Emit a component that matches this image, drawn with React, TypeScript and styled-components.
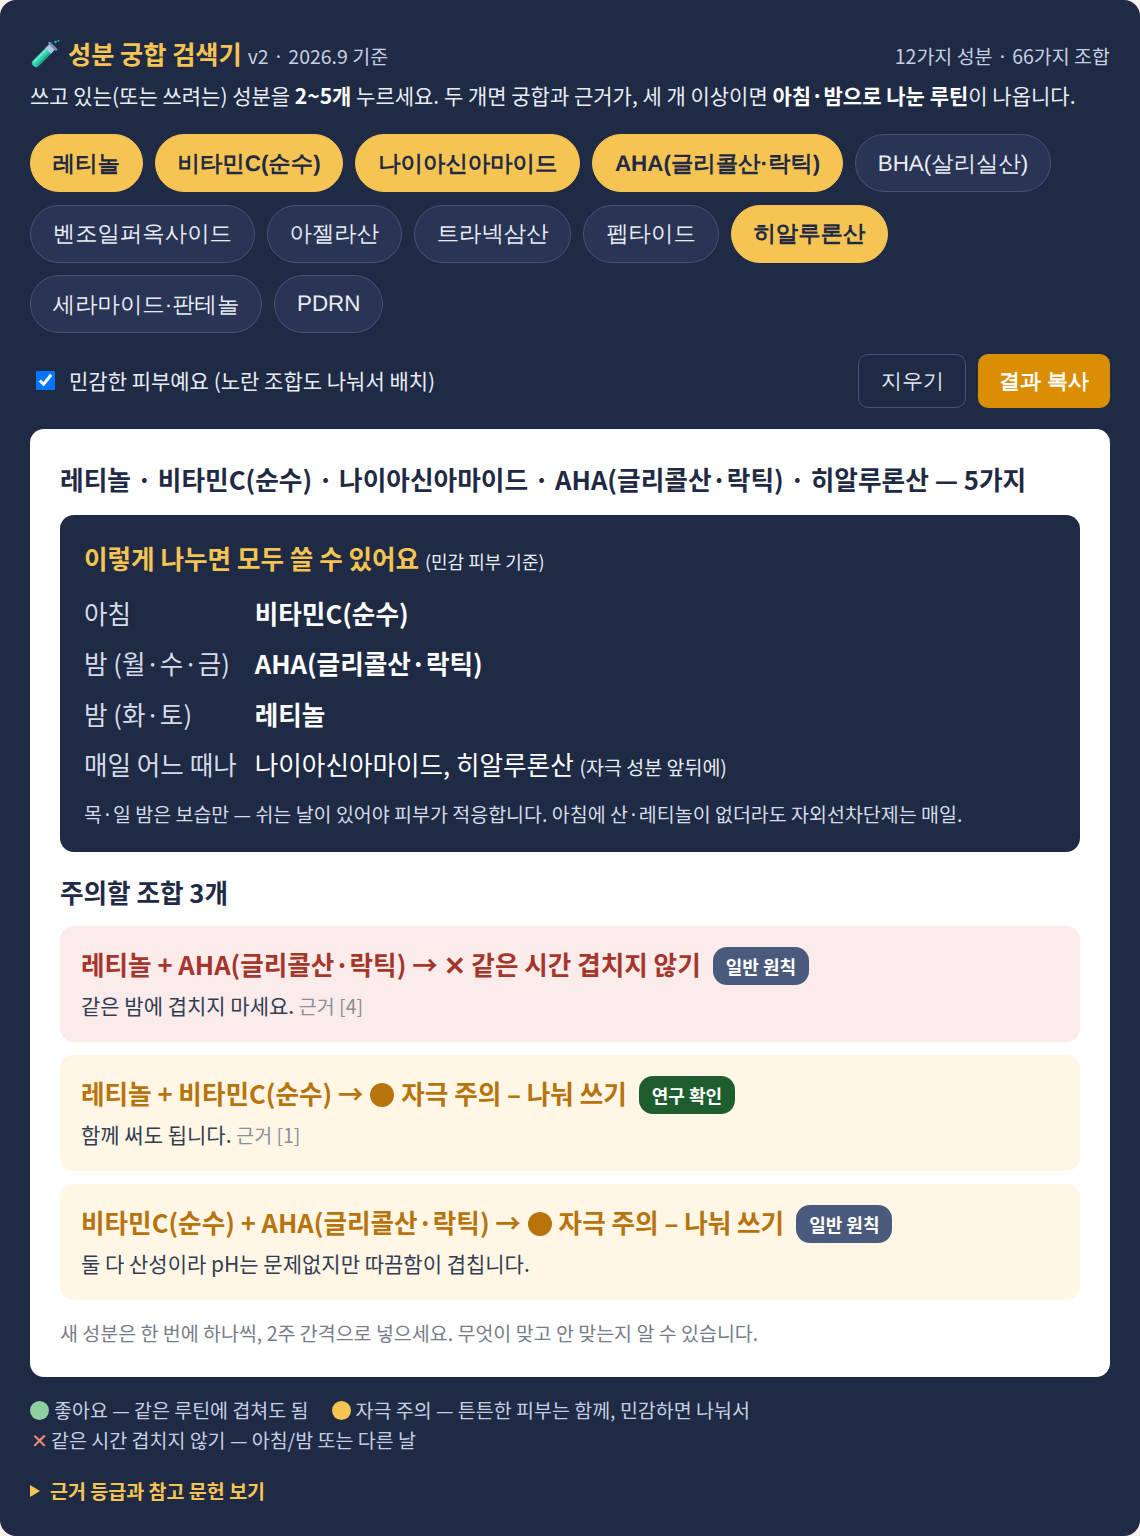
import styled, { createGlobalStyle } from "styled-components";

const GlobalStyle = createGlobalStyle`
  html, body {
    margin: 0;
    padding: 0;
    background: #f5f1ea;
  }
  body {
    font-family: "Noto Sans CJK KR", "Noto Sans", sans-serif;
  }
  * {
    box-sizing: border-box;
  }
`;

const Shell = styled.div`
  width: 1140px;
  height: 1536px;
  background: #1f2a44;
  border-radius: 16px;
  padding: 30px;
  color: #fff;
  overflow: hidden;
`;

const Header = styled.div`
  display: flex;
  justify-content: space-between;
  align-items: baseline;
  height: 49px;
  padding-top: 5px;
`;

const Title = styled.h1`
  margin: 0;
  display: flex;
  align-items: baseline;
  gap: 6px;
  font-size: 25.2px;
  line-height: 36px;
  font-weight: 700;
  color: #f6c453;
`;

const TubeSvg = styled.svg`
  align-self: center;
  flex: none;
  margin-top: -2px;
`;

const TitleText = styled.span`
  margin-left: 2px;
`;

const Version = styled.span`
  font-size: 19.5px;
  font-weight: 400;
  color: #c6cfe2;
`;

const Count = styled.div`
  font-size: 19.5px;
  color: #c6cfe2;
`;

const Intro = styled.p`
  margin: 0;
  font-size: 21px;
  line-height: 32px;
  color: #e8ecf5;

  b {
    color: #fff;
    font-weight: 700;
  }
`;

const Chips = styled.div`
  display: flex;
  flex-wrap: wrap;
  gap: 12.5px 12px;
  margin-top: 23px;
`;

const Chip = styled.button<{ $on?: boolean }>`
  height: 58px;
  padding: 0 21.8px;
  border-radius: 29px;
  border: 1.5px solid ${(p) => (p.$on ? "#f6c453" : "#44537a")};
  background: ${(p) => (p.$on ? "#f6c453" : "#2a3556")};
  color: ${(p) => (p.$on ? "#1f2a44" : "#e8ecf5")};
  font-family: "Liberation Sans", sans-serif;
  font-size: 22.4px;
  font-weight: ${(p) => (p.$on ? 600 : 400)};
  text-rendering: geometricPrecision;
`;

const Controls = styled.div`
  display: flex;
  align-items: center;
  justify-content: space-between;
  margin-top: 21px;
`;

const CheckLabel = styled.label`
  display: flex;
  align-items: center;
  gap: 14px;
  padding: 0 0 2px 6px;
  font-size: 21px;
  color: #e8ecf5;
`;

const Check = styled.input`
  width: 19px;
  height: 19px;
  margin: 0;
`;

const Actions = styled.div`
  display: flex;
  gap: 12px;
`;

const GhostButton = styled.button`
  height: 54px;
  padding: 0 21.5px;
  border-radius: 10px;
  border: 1.5px solid #44537a;
  background: transparent;
  color: #e8ecf5;
  font-family: "Liberation Sans", sans-serif;
  font-size: 20.8px;
`;

const PrimaryButton = styled(GhostButton)`
  padding: 0 21px;
  border: 0;
  background: #d98e04;
  color: #fff;
  font-weight: 700;
`;

const Result = styled.section`
  margin-top: 21px;
  background: #fff;
  border-radius: 14px;
  padding: 30px 30px 29px;
  color: #1f2a44;
`;

const ResultTitle = styled.h2`
  margin: 0;
  font-size: 25.7px;
  line-height: 40px;
  font-weight: 700;
`;

const Routine = styled.div`
  margin-top: 16px;
  background: #1f2a44;
  border-radius: 14px;
  padding: 23px 24px 23px;
  color: #fff;
`;

const RoutineHead = styled.div`
  font-size: 25.6px;
  line-height: 40px;
  font-weight: 700;
  color: #f6c453;
`;

const Small = styled.span<{ $large?: boolean }>`
  font-size: ${(p) => (p.$large ? 19.5 : 18)}px;
  font-weight: 400;
  color: #e8ecf5;
`;

const Rows = styled.div`
  display: grid;
  grid-template-columns: max-content 1fr;
  column-gap: 18px;
  margin-top: 7px;
`;

const RowLabel = styled.div`
  font-size: 25.6px;
  line-height: 50.3px;
  color: #d5dbe9;
`;

const RowValue = styled.div<{ $strong?: boolean }>`
  font-size: 25.6px;
  line-height: 50.3px;
  font-weight: ${(p) => (p.$strong ? 700 : 400)};
  color: #fff;
`;

const RoutineNote = styled.p`
  margin: 7px 0 0;
  font-size: 19.5px;
  line-height: 30px;
  color: #d5dbe9;
`;

const Section = styled.h3`
  margin: 20px 0 0;
  padding-bottom: 1px;
  font-size: 25.6px;
  line-height: 40px;
  font-weight: 700;
`;

const Pair = styled.div<{ $bad?: boolean }>`
  margin-top: 13px;
  padding: 14px 21px 20px;
  border-radius: 14px;
  background: ${(p) => (p.$bad ? "#fbeceb" : "#fff6e5")};
`;

const PairHead = styled.div<{ $bad?: boolean }>`
  display: flex;
  align-items: center;
  gap: 12px;
  height: 46px;
  font-size: 25.6px;
  font-weight: 700;
  color: ${(p) => (p.$bad ? "#a5362c" : "#b7730c")};
`;

const Badge = styled.span<{ $green?: boolean }>`
  display: flex;
  align-items: center;
  height: 38px;
  margin-top: 6.5px;
  padding: 0 13px;
  border-radius: 14px;
  background: ${(p) => (p.$green ? "#1e5e2e" : "#4a5a7d")};
  color: #fff;
  font-size: 18px;
  font-weight: 700;
`;

const PairBody = styled.p`
  margin: 3px 0 0;
  font-size: 21px;
  line-height: 33px;
  color: #333d52;
`;

const Source = styled.span`
  font-size: 19.5px;
  color: #8a8f99;
`;

const Tip = styled.p`
  margin: 18px 0 0;
  font-size: 19.5px;
  line-height: 30px;
  color: #777d88;
`;

const Legend = styled.div`
  margin-top: 18px;
  font-size: 19.5px;
  line-height: 30px;
  color: #c6cfe2;
`;

const LegendRow = styled.div`
  display: flex;
  gap: 23px;
`;

const LegendItem = styled.span`
  display: flex;
  align-items: center;
  gap: 5px;
`;

const Dot = styled.span<{ $color: string }>`
  width: 19px;
  height: 19px;
  border-radius: 50%;
  background: ${(p) => p.$color};
`;

const Cross = styled.span`
  color: #f08a7b;
  margin: 0 -2px 0 1px;
`;

const Disclosure = styled.div`
  display: flex;
  align-items: center;
  gap: 10px;
  margin-top: 20px;
  font-size: 19.5px;
  line-height: 32px;
  font-weight: 700;
  color: #f6c453;
`;

const Caret = styled.span`
  width: 0;
  height: 0;
  border-left: 10px solid #f6c453;
  border-top: 6px solid transparent;
  border-bottom: 6px solid transparent;
`;

const InlineDot = styled.span`
  display: inline-block;
  width: 24px;
  height: 24px;
  margin: 0 1px;
  border-radius: 50%;
  background: #b7730c;
  vertical-align: -3px;
`;

const TubeIcon = () => (
  <TubeSvg width="30" height="30" viewBox="0 0 30 30">
    <line x1="6" y1="24" x2="19" y2="11" stroke="#2ed0aa" strokeWidth="8" strokeLinecap="round" />
    <line x1="4" y1="23" x2="17" y2="10" stroke="#6fe6cb" strokeWidth="2" strokeLinecap="round" />
    <line x1="8" y1="26" x2="20" y2="14" stroke="#1ea98c" strokeWidth="2" strokeLinecap="round" />
    <line x1="18" y1="12" x2="23" y2="7" stroke="#a9c8e8" strokeWidth="8" />
    <line x1="19.5" y1="4" x2="26" y2="10.5" stroke="#6f93b8" strokeWidth="2.5" strokeLinecap="round" />
    <circle cx="25.5" cy="3" r="1.3" fill="#1fbf9f" />
    <circle cx="28.5" cy="1.8" r="1" fill="#1fbf9f" />
  </TubeSvg>
);

const chips = [
  { name: "레티놀", on: true },
  { name: "비타민C(순수)", on: true },
  { name: "나이아신아마이드", on: true },
  { name: "AHA(글리콜산·락틱)", on: true },
  { name: "BHA(살리실산)" },
  { name: "벤조일퍼옥사이드" },
  { name: "아젤라산" },
  { name: "트라넥삼산" },
  { name: "펩타이드" },
  { name: "히알루론산", on: true },
  { name: "세라마이드·판테놀" },
  { name: "PDRN" },
];

export default function App() {
  return (
    <>
      <GlobalStyle />
      <Shell>
        <Header>
          <Title>
            <TubeIcon />
            <TitleText>성분 궁합 검색기</TitleText>
            <Version>v2 · 2026.9 기준</Version>
          </Title>
          <Count>12가지 성분 · 66가지 조합</Count>
        </Header>
        <Intro>
          쓰고 있는(또는 쓰려는) 성분을 <b>2~5개</b> 누르세요. 두 개면 궁합과 근거가, 세 개 이상이면{" "}
          <b>아침·밤으로 나눈 루틴</b>이 나옵니다.
        </Intro>
        <Chips>
          {chips.map((c) => (
            <Chip key={c.name} $on={c.on}>
              {c.name}
            </Chip>
          ))}
        </Chips>
        <Controls>
          <CheckLabel>
            <Check type="checkbox" defaultChecked />
            민감한 피부예요 (노란 조합도 나눠서 배치)
          </CheckLabel>
          <Actions>
            <GhostButton>지우기</GhostButton>
            <PrimaryButton>결과 복사</PrimaryButton>
          </Actions>
        </Controls>
        <Result>
          <ResultTitle>레티놀 · 비타민C(순수) · 나이아신아마이드 · AHA(글리콜산·락틱) · 히알루론산 — 5가지</ResultTitle>
          <Routine>
            <RoutineHead>
              이렇게 나누면 모두 쓸 수 있어요 <Small>(민감 피부 기준)</Small>
            </RoutineHead>
            <Rows>
              <RowLabel>아침</RowLabel>
              <RowValue $strong>비타민C(순수)</RowValue>
              <RowLabel>밤 (월·수·금)</RowLabel>
              <RowValue $strong>AHA(글리콜산·락틱)</RowValue>
              <RowLabel>밤 (화·토)</RowLabel>
              <RowValue $strong>레티놀</RowValue>
              <RowLabel>매일 어느 때나</RowLabel>
              <RowValue>
                나이아신아마이드, 히알루론산 <Small $large>(자극 성분 앞뒤에)</Small>
              </RowValue>
            </Rows>
            <RoutineNote>목·일 밤은 보습만 — 쉬는 날이 있어야 피부가 적응합니다. 아침에 산·레티놀이 없더라도 자외선차단제는 매일.</RoutineNote>
          </Routine>
          <Section>주의할 조합 3개</Section>
          <Pair $bad>
            <PairHead $bad>
              레티놀 + AHA(글리콜산·락틱) → ✕ 같은 시간 겹치지 않기
              <Badge>일반 원칙</Badge>
            </PairHead>
            <PairBody>
              같은 밤에 겹치지 마세요. <Source>근거 [4]</Source>
            </PairBody>
          </Pair>
          <Pair>
            <PairHead>
              <span>
                레티놀 + 비타민C(순수) → <InlineDot /> 자극 주의 – 나눠 쓰기
              </span>
              <Badge $green>연구 확인</Badge>
            </PairHead>
            <PairBody>
              함께 써도 됩니다. <Source>근거 [1]</Source>
            </PairBody>
          </Pair>
          <Pair>
            <PairHead>
              <span>
                비타민C(순수) + AHA(글리콜산·락틱) → <InlineDot /> 자극 주의 – 나눠 쓰기
              </span>
              <Badge>일반 원칙</Badge>
            </PairHead>
            <PairBody>둘 다 산성이라 pH는 문제없지만 따끔함이 겹칩니다.</PairBody>
          </Pair>
          <Tip>새 성분은 한 번에 하나씩, 2주 간격으로 넣으세요. 무엇이 맞고 안 맞는지 알 수 있습니다.</Tip>
        </Result>
        <Legend>
          <LegendRow>
            <LegendItem>
              <Dot $color="#8fd19e" />
              좋아요 — 같은 루틴에 겹쳐도 됨
            </LegendItem>
            <LegendItem>
              <Dot $color="#f6c453" />
              자극 주의 — 튼튼한 피부는 함께, 민감하면 나눠서
            </LegendItem>
          </LegendRow>
          <LegendRow>
            <LegendItem>
              <Cross>✕</Cross>
              같은 시간 겹치지 않기 — 아침/밤 또는 다른 날
            </LegendItem>
          </LegendRow>
        </Legend>
        <Disclosure>
          <Caret />
          근거 등급과 참고 문헌 보기
        </Disclosure>
      </Shell>
    </>
  );
}
